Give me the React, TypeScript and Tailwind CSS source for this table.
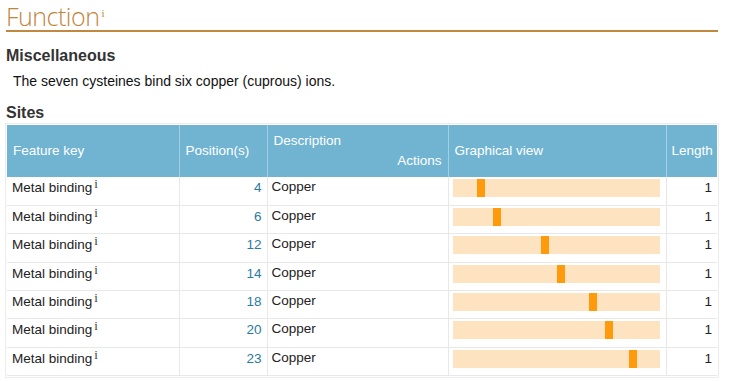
import React from "react";

const rows = [4, 6, 12, 14, 18, 20, 23];
const L = 26;

export default function App() {
  return (
    <div className="w-[733px] h-[381px] bg-white overflow-hidden" style={{ fontFamily: '"Liberation Sans", Arial, sans-serif' }}>
      <div className="px-[6px]">
        <div className="h-[32px] border-b-2 border-[#c1893f] w-[712px] flex items-end">
          <span className="text-[25px] leading-[28px] text-[#c1853a] tracking-[-0.5px]" style={{ fontFamily: '"Open Sans", "Liberation Sans", sans-serif', fontWeight: 300 }}>
            Function
          </span>
          <span className="self-start mt-[8px] ml-[2px] text-[11px] leading-none text-[#c1853a]" style={{ fontFamily: '"Liberation Serif", serif' }}>i</span>
        </div>
        <h3 className="mt-[15px] text-[16px] leading-[18px] font-bold text-[#333]">Miscellaneous</h3>
        <p className="mt-[8px] ml-[7px] text-[14px] leading-[16px] text-[#111]">The seven cysteines bind six copper (cuprous) ions.</p>
        <h3 className="mt-[15px] text-[16px] leading-[18px] font-bold text-[#333]">Sites</h3>
        <div className="mt-[1px] ml-[-1px] w-[714px] border border-[#ececec] p-px">
          <table className="w-[710px] border-collapse table-fixed text-[13.5px]">
            <colgroup>
              <col className="w-[172px]" />
              <col className="w-[88px]" />
              <col className="w-[181px]" />
              <col className="w-[218px]" />
              <col className="w-[51px]" />
            </colgroup>
            <thead>
              <tr className="bg-[#70b4d2] text-white h-[52px]">
                <th className="text-left font-normal px-[6px] border-r border-[#a5cfe2]">Feature key</th>
                <th className="text-left font-normal px-[6px] border-r border-[#a5cfe2]">Position(s)</th>
                <th className="font-normal px-[6px] border-r border-[#a5cfe2] align-top">
                  <div className="text-left pt-[8px] leading-[16px]">Description</div>
                  <div className="text-right leading-[16px] pt-[4px]">Actions</div>
                </th>
                <th className="text-left font-normal px-[6px] border-r border-[#a5cfe2]">Graphical view</th>
                <th className="text-left font-normal px-[5px]">Length</th>
              </tr>
            </thead>
            <tbody>
              {rows.map((p) => (
                <tr key={p} className="h-[28.4px] border-b border-[#e8e8e8] text-[#222]">
                  <td className="px-[5px] border-r border-[#e8e8e8] align-top pt-[3px] leading-[15px]">
                    Metal binding
                    <span className="inline-block align-top text-[13px] leading-none text-[#444] ml-[2px] relative top-[-3px]" style={{ fontFamily: '"Liberation Serif", serif' }}>i</span>
                  </td>
                  <td className="px-[5px] border-r border-[#e8e8e8] align-top pt-[3px] leading-[15px] text-right text-[#2a7ba0]">{p}</td>
                  <td className="px-[4px] border-r border-[#e8e8e8] align-top pt-[2px] leading-[15px]">Copper</td>
                  <td className="px-[4px] border-r border-[#e8e8e8] align-top pt-[2px]">
                    <div className="relative h-[18px] w-[207px] bg-[#fde3bf]">
                      <div
                        className="absolute top-0 h-[18px] w-[8px] bg-[#ff9a0d]"
                        style={{ left: `${((p - 1) / L) * 207 + 1}px` }}
                      />
                    </div>
                  </td>
                  <td className="px-[5px] align-top pt-[3px] leading-[15px] text-right">1</td>
                </tr>
              ))}
            </tbody>
          </table>
        </div>
      </div>
    </div>
  );
}
